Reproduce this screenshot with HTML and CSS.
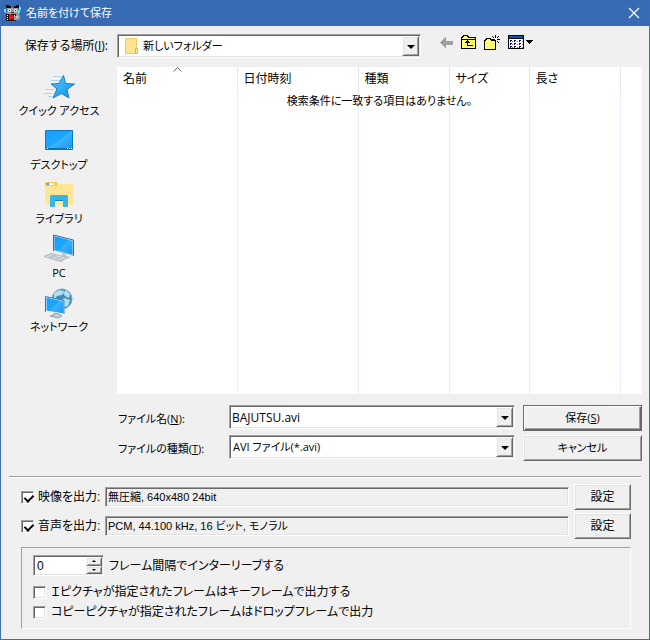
FILE: index.html
```html
<!DOCTYPE html>
<html lang="ja">
<head>
	<meta charset="UTF-8">
	<title>名前を付けて保存</title>
	<link rel="stylesheet" href="styles.css">
</head>
<body>
<form class="window">
	<div class="titlebar">
		<svg class="app-icon" width="18" height="18" viewBox="0 0 18 18" shape-rendering="crispEdges">
			<path fill="#111" d="M2 1h3v1h2v2h3V2h2V1h3v3H2z"/>
			<path fill="#999" d="M3 4h11v6H3z"/>
			<path fill="#ddd" d="M4 5h3v3H4zM10 5h3v3h-3z"/>
			<path fill="#333" d="M5 6h1v1H5zM11 6h1v1h-1zM7 8h3v1H7z"/>
			<path fill="#111" d="M2 10h10v7H2z"/>
			<path fill="#4ee6f5" d="M0 5h2v4H1V8H0zM15 2h1v1h1v3h-1v3h-1v1h-1V6h1z"/>
			<path fill="#fff" d="M3 11h1v1H3zM3 13h1v1H3zM3 15h1v1H3zM10 11h1v1h-1zM10 15h1v1h-1z"/>
			<path fill="#e01818" d="M6 10h1v1h2v1h2v2H9v1H7v1H5v-6z"/>
			<path fill="#999" d="M12 10h3v1h1v4h-1v1h-4v-1h-1v-3h2z"/>
			<path fill="#ccc" d="M12 12h2v2h-2z"/>
		</svg>
		<h1>名前を付けて保存</h1>
		<button type="button" class="close" aria-label="閉じる">
			<svg width="12" height="12" viewBox="0 0 12 12"><path d="M1 1l10 10M11 1L1 11" stroke="#fff" stroke-width="1.2"/></svg>
		</button>
	</div>

	<div class="main">
		<label class="look-label" for="folder">保存する場所(<u>I</u>):</label>
		<div class="look-row">
			<div class="combo folder">
				<svg class="folder-icon" width="14" height="16" viewBox="0 0 14 16">
					<path fill="#ffe48f" stroke="#ecc964" d="M.5.5h11v15H.5z"/>
					<path fill="#ffe9a6" stroke="#dfb845" d="M10.500 10.500h2v5h-2z"/>
				</svg>
				<select id="folder"><option>新しいフォルダー</option></select>
				<span class="drop"></span>
			</div>
			<div class="tools">
				<button type="button" aria-label="戻る">
					<svg width="14" height="16" viewBox="0 0 14 16" shape-rendering="crispEdges"><path fill="#a0a0a0" d="M0 7h1V6h1V5h1V4h1V3h1V2h1v4h7v4H6v3H5v-1H4v-1H3v-1H2V9H1V8H0z"/></svg>
				</button>
				<button type="button" aria-label="上のフォルダー">
					<svg width="16" height="16" viewBox="0 0 16 16" shape-rendering="crispEdges">
						<path fill="#ffff70" stroke="#000" d="M.5 13.500v-11h1v-1h1v-1h4v1h1v1h7v11z"/>
						<path fill="#000" d="M1 4h13v1H1zM6 5h1v5H6zM5 6h3v1H5zM4 7h5v1H4zM6 10h6v1H6z"/>
					</svg>
				</button>
				<button type="button" aria-label="新しいフォルダー">
					<svg width="17" height="16" viewBox="0 0 17 16" shape-rendering="crispEdges">
						<path fill="#ffff70" stroke="#000" d="M.5 14.500v-9h1v-1h1v-1h4v1h1v1h4v9z"/>
						<path d="M11 0h1v3h-1zM8 1h1v1H8zM9 2h1v1H9zM14 1h1v1h-1zM13 2h1v1h-1zM8 4h3v1H8zM13 4h3v1h-3zM11 5h1v3h-1zM13 6h1v1h-1zM14 7h1v1h-1z"/>
						<path fill="#fff" d="M11 3h2v2h-2z"/>
					</svg>
				</button>
				<button type="button" aria-label="表示メニュー">
					<svg width="25" height="16" viewBox="0 0 25 16" shape-rendering="crispEdges">
						<path fill="#fff" stroke="#000" d="M.5.5h15v13H.5z"/>
						<path fill="#0058b0" d="M1 1h14v2H1z"/>
						<path d="M0 3h16v1H0z"/>
						<path fill="#00007b" d="M2 5h2v1H2zM6 5h2v1H6zM11 5h2v1h-2zM2 8h2v1H2zM6 8h2v1H6zM11 8h2v1h-2zM2 11h2v1H2zM6 11h2v1H6zM11 11h2v1h-2zM2 6h1v1H2zM6 6h1v1H6zM11 6h1v1h-1zM2 9h1v1H2zM6 9h1v1H6zM11 9h1v1h-1zM2 12h1v1H2zM6 12h1v1H6zM11 12h1v1h-1z"/>
						<path fill="#777" d="M4 6h1v1H4zM9 6h1v1H9zM14 6h1v1h-1zM4 9h1v1H4zM9 9h1v1H9zM14 9h1v1h-1zM4 12h1v1H4zM9 12h1v1H9zM14 12h1v1h-1z"/>
						<path d="M18 5h7v1h-7zM19 6h5v1h-5zM20 7h3v1h-3zM21 8h1v1h-1z"/>
					</svg>
				</button>
			</div>
		</div>

		<div class="places">
			<button type="button">
				<svg width="32" height="32" viewBox="0 0 32 32">
					<defs>
						<linearGradient id="blue" x1="0" y1="0" x2="1" y2="1"><stop offset="0" stop-color="#5cc8ff"/><stop offset="1" stop-color="#0d90ea"/></linearGradient>
						<linearGradient id="screen" x1="0" y1="0" x2="1" y2="1"><stop offset="0" stop-color="#14a0f8"/><stop offset=".5" stop-color="#1ba7ff"/><stop offset=".51" stop-color="#3bb4ff"/><stop offset="1" stop-color="#1697ee"/></linearGradient>
					</defs>
					<path d="M10 5.500h9M8 9.500h9M3 18.500h8M1 22.500h8M5 25.500h4" stroke="#a9d6f0"/>
					<path fill="url(#blue)" stroke="#1580c4" d="M20.500 4.500l2 8 9 .5-7.500 5.500 2 8.500-7.500-4.500-8.500 4.500 4-9-6-5 8-.5z"/>
				</svg>
				クイック アクセス
			</button>
			<button type="button">
				<svg width="32" height="32" viewBox="0 0 32 32">
					<path fill="url(#screen)" stroke="#087ac4" d="M2.500 5.500h27v19h-27z"/>
					<path fill="#0871b5" d="M3 23h26v1H3z"/>
					<path fill="#fff" d="M4 23h1v1H4zM24 23h1v1h-1zM26 23h1v1h-1zM28 23h1v1h-1z"/>
				</svg>
				デスクトップ
			</button>
			<button type="button">
				<svg width="32" height="32" viewBox="0 0 32 32">
					<path fill="#f8cd45" d="M2 3h12l1 2-1 2H2z"/>
					<path fill="#fff" d="M4 4h7v2H4z"/>
					<path fill="#28a4d8" d="M4 4h2v2H4z"/>
					<path fill="#ffe594" d="M2 7h12l2-2h14v21H2z"/>
					<path fill="#36b5e8" d="M7 17l1-1h16l1 1v11h-5v-7h-8v7H7z"/>
					<path fill="#1788bd" d="M12 21h8v1h-8z"/>
				</svg>
				ライブラリ
			</button>
			<button type="button">
				<svg width="32" height="32" viewBox="0 0 32 32">
					<path fill="url(#screen)" stroke="#c9dce8" d="M11 2.500l19 5v15l-19-5z"/>
					<path fill="none" stroke="#41708d" d="M10.500 18V2l20 5v16"/>
					<path fill="#b9c5cc" d="M19 20l4 1v2l5 1-5 2-8-2 4-1z"/>
					<path fill="#e5ecef" stroke="#a9b4ba" d="M1 23.500l7-3 16 4-6 4z"/>
					<path d="M4 22.500l15 4.500M6 21.500l15 4.500M7 25l6-3M12 27l6-3" stroke="#b5bfc4"/>
				</svg>
				PC
			</button>
			<button type="button">
				<svg width="32" height="32" viewBox="0 0 32 32">
					<circle cx="19" cy="12" r="10" fill="#418fb6" stroke="#72a9c4"/>
					<path fill="#b9dceb" d="M11 6l5-3 5 1-2 4-5 1-3 4zM23 3l4 4-1 4-4-2-2-3zM21 11l6 2-2 6-4 1-3-5z"/>
					<path fill="url(#screen)" stroke="#fff" d="M3 10l18 4v13L3 24z"/>
					<path fill="none" stroke="#2d7eae" d="M2.500 25V9.500L21 13.500V27"/>
					<path fill="#c2d1d9" stroke="#90a3ae" d="M11 26v2l-4 1 8 2 4-2-3-2z"/>
				</svg>
				ネットワーク
			</button>
		</div>

		<div class="filelist">
			<table>
				<thead>
					<tr><th class="c1">名前</th><th class="c2">日付時刻</th><th class="c3">種類</th><th class="c4">サイズ</th><th class="c5">長さ</th><th></th></tr>
				</thead>
				<tbody>
					<tr><td></td><td></td><td></td><td></td><td></td><td></td></tr>
				</tbody>
			</table>
			<svg class="sort" width="9" height="5" viewBox="0 0 9 5"><path d="M.5 4.500l4-4 4 4" fill="none" stroke="#666"/></svg>
			<p class="empty">検索条件に一致する項目はありません。</p>
		</div>

		<div class="fields">
			<label for="filename">ファイル名(<u>N</u>):</label>
			<div class="combo">
				<input id="filename" type="text" value="BAJUTSU.avi">
				<button type="button" class="drop" aria-label="履歴"></button>
			</div>
			<button type="submit" class="btn default">保存(<u>S</u>)</button>
			<label for="filetype">ファイルの種類(<u>T</u>):</label>
			<div class="combo">
				<select id="filetype"><option>AVI ファイル(*.avi)</option></select>
				<span class="drop"></span>
			</div>
			<button type="button" class="btn">キャンセル</button>
		</div>
	</div>

	<hr>

	<div class="output">
		<div class="out-row">
			<input type="checkbox" id="video" checked>
			<label for="video">映像を出力:</label>
			<input type="text" class="info" value="無圧縮, 640x480 24bit" aria-label="映像の形式" readonly>
			<button type="button" class="btn">設定</button>
		</div>
		<div class="out-row">
			<input type="checkbox" id="audio" checked>
			<label for="audio">音声を出力:</label>
			<input type="text" class="info" value="PCM, 44.100 kHz, 16 ビット, モノラル" aria-label="音声の形式" readonly>
			<button type="button" class="btn">設定</button>
		</div>

		<div class="group">
			<div class="line interleave">
				<div class="spin">
					<input type="text" id="interleave" value="0">
					<div class="arrows">
						<button type="button" class="up" aria-label="増やす"></button>
						<button type="button" class="down" aria-label="減らす"></button>
					</div>
				</div>
				<label for="interleave">フレーム間隔でインターリーブする</label>
			</div>
			<div class="line">
				<input type="checkbox" id="ipic">
				<label for="ipic">Ｉピクチャが指定されたフレームはキーフレームで出力する</label>
			</div>
			<div class="line">
				<input type="checkbox" id="copypic">
				<label for="copypic">コピーピクチャが指定されたフレームはドロップフレームで出力</label>
			</div>
		</div>
	</div>
</form>
</body>
</html>
```

FILE: styles.css
```css
* {
	box-sizing: border-box;
}
body {
	margin: 0;
	background: #f0f0f0;
	color: #000;
	font: 12px/16px "Open Sans", "Noto Sans CJK JP", sans-serif;
	font-feature-settings: "palt";
}
button, input, select {
	margin: 0;
	padding: 0;
	border: 0;
	border-radius: 0;
	background: none;
	color: inherit;
	font: inherit;
	font-feature-settings: inherit;
	outline: none;
	appearance: none;
}
svg {
	display: block;
}
.window {
	min-height: 100vh;
	border: 1px solid #3c71b8;
	border-top: 0;
}

/* title bar */
.titlebar {
	display: flex;
	align-items: center;
	height: 26px;
	padding: 0 9px 0 3px;
	background: #376bb4;
	color: #fff;
}
.titlebar h1 {
	flex: 1;
	margin: 0 0 0 4px;
	font-size: 11px;
	font-weight: normal;
}

.main {
	display: grid;
	grid-template-columns: 116px 1fr;
	padding-right: 7px;
}
.look-label {
	padding: 12px 9px 0 0;
	text-align: right;
}
.look-row {
	display: flex;
	align-items: flex-start;
	height: 41px;
	padding-top: 8px;
}

/* sunken boxes */
.combo, .spin, .info, input[type=checkbox] {
	border: 1px solid;
	border-color: #a0a0a0 #fff #fff #a0a0a0;
	box-shadow: inset 1px 1px #696969, inset -1px -1px #e3e3e3;
	background: #fff;
}
.combo {
	position: relative;
	height: 24px;
}
.combo select, .combo input {
	display: block;
	width: 100%;
	height: 22px;
	padding: 0 20px 0 2px;
}
.combo select {
	padding-left: 3px;
	font-size: 11px;
}
.folder {
	width: 304px;
}
.folder select {
	padding-left: 25px;
}
.folder-icon {
	position: absolute;
	left: 7px;
	top: 3px;
	pointer-events: none;
}

/* raised boxes */
.btn, .drop, .arrows button {
	border: 1px solid;
	border-color: #fff #696969 #696969 #fff;
	box-shadow: inset 1px 1px #e3e3e3, inset -1px -1px #a0a0a0;
	background: #f0f0f0;
}
.drop {
	position: absolute;
	top: 1px;
	right: 1px;
	bottom: 1px;
	width: 17px;
	pointer-events: none;
}
.drop::after {
	content: "";
	position: absolute;
	left: 4px;
	top: 8px;
	border: 4px solid transparent;
	border-top-color: #000;
	border-bottom: 0;
}
.btn.default {
	border-color: #696969;
	box-shadow: inset 1px 1px #fff, inset -1px -1px #696969, inset -2px -2px #a0a0a0;
}

.tools {
	display: flex;
	gap: 7px;
	padding: 1px 0 0 19px;
}

.places {
	display: flex;
	flex-direction: column;
	gap: 6px;
	padding-top: 4px;
}
.places button {
	display: flex;
	flex-direction: column;
	align-items: center;
	font-size: 11px;
}

.filelist {
	position: relative;
	height: 327px;
	background: #fff;
}
.filelist table {
	width: 100%;
	height: 100%;
	table-layout: fixed;
	border-collapse: collapse;
}
.filelist th, .filelist td {
	padding: 0;
	border-right: 1px solid #e8f0fa;
}
.filelist th {
	height: 24px;
	padding-left: 6px;
	border-right-color: #e5e5e5;
	font-weight: normal;
	text-align: left;
}
.filelist th:last-child, .filelist td:last-child {
	width: 22px;
	border-right: 0;
}
.c1 {
	width: 120px;
}
.c2 {
	width: 121px;
}
.c3 {
	width: 91px;
}
.c4 {
	width: 80px;
}
.sort {
	position: absolute;
	left: 56px;
	top: 0;
}
.empty {
	position: absolute;
	left: 0;
	right: 0;
	top: 26px;
	margin: 0;
	font-size: 11px;
	text-align: center;
}

.fields {
	grid-column: 2;
	display: grid;
	grid-template-columns: 112px 1fr 119px;
	row-gap: 4px;
	padding-top: 11px;
}
.fields label {
	padding: 6px 0 0 1px;
	font-size: 11px;
}
.fields .combo {
	margin-right: 8px;
}
.fields .btn {
	height: 26px;
	font-size: 11px;
}

hr {
	margin: 15px 8px 6px;
	border: 0;
	border-top: 1px solid #a0a0a0;
	border-bottom: 1px solid #fff;
}

/* avi output settings */
.output {
	padding: 0 18px 10px 20px;
	font-family: "Liberation Sans", "Noto Sans CJK JP", sans-serif;
}
input[type=checkbox] {
	width: 13px;
	height: 13px;
}
input[type=checkbox]:checked::after {
	content: "";
	display: block;
	width: 4px;
	height: 7px;
	margin: 1px 0 0 4px;
	border: solid #000;
	border-width: 0 2px 2px 0;
	transform: rotate(45deg);
}
.out-row {
	display: flex;
	align-items: center;
	margin-bottom: 3px;
}
.out-row label {
	width: 67px;
	margin-left: 4px;
}
.out-row .info {
	flex: 1;
	height: 20px;
	margin-right: 5px;
	padding: 0 0 2px 2px;
	background: #f0f0f0;
	font-size: 11px;
}
.out-row .btn {
	width: 57px;
	height: 26px;
}
.group {
	display: flex;
	flex-direction: column;
	gap: 4px;
	margin-top: 8px;
	padding: 7px 11px 8px;
	border: 1px solid;
	border-color: #a0a0a0 #fff #fff #a0a0a0;
}
.line {
	display: flex;
	align-items: center;
	gap: 5px;
}
.interleave {
	margin-bottom: 4px;
}
.spin {
	display: flex;
	width: 71px;
	height: 21px;
	padding: 1px;
}
.spin input {
	flex: 1;
	width: 0;
	padding-left: 2px;
}
.arrows {
	display: flex;
	flex-direction: column;
	width: 16px;
}
.arrows button {
	display: flex;
	flex: 1;
	align-items: center;
	justify-content: center;
}
.arrows button::after {
	content: "";
	border: 2px solid transparent;
}
.arrows .up::after {
	border-top: 0;
	border-bottom-color: #000;
}
.arrows .down::after {
	border-bottom: 0;
	border-top-color: #000;
}
```
